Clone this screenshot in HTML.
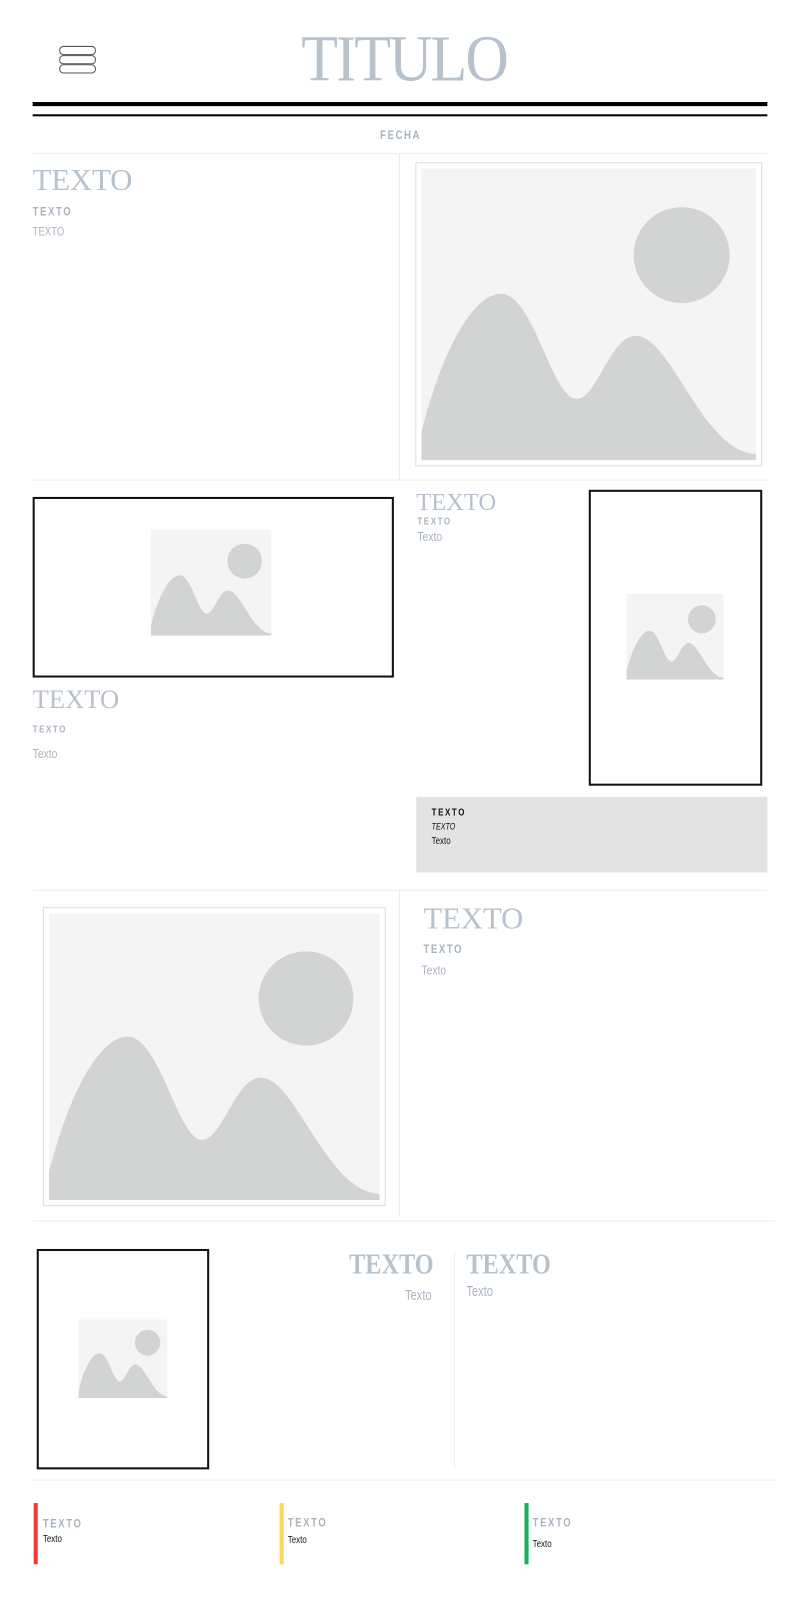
<!DOCTYPE html>
<html><head><meta charset="utf-8"><style>
*{margin:0;padding:0;box-sizing:border-box}
body{width:800px;height:1600px;background:#fff;position:relative;overflow:hidden;font-family:"Liberation Sans",sans-serif}
#w{position:absolute;left:0;top:0;width:784px;height:1568px;transform:scale(1.0204);transform-origin:0 0}
.a{position:absolute;white-space:nowrap}
.n{transform:scaleX(.78);transform-origin:0 0}
.ser{font-family:"Liberation Serif",serif;color:#b7c2cc;line-height:1}
.sm{font-weight:bold;letter-spacing:2px;color:#a9b4bf;line-height:1}
.tx{color:#aab5c0;line-height:1}
.hl{position:absolute;height:1px;background:#ececec}
.vl{position:absolute;width:1px;background:#ececec}
.ph{position:absolute;display:block}
.bx{position:absolute;border:2px solid #111}
.fr{position:absolute;border:1px solid #ddd}
.bar{position:absolute;width:4px;top:1473px;height:60px}
</style></head><body><div id="w">
<svg width="0" height="0" style="position:absolute"><defs><symbol id="im" viewBox="0 0 328 286" preserveAspectRatio="none"><rect width="328" height="286" fill="#f4f4f4"/><circle cx="255" cy="85" r="47" fill="#d2d3d3"/><path d="M0 258 C20 180 50 123 78 123 C110 123 128 226 152 226 C172 226 185 164 210 164 C245 164 275 278 328 280 L328 286 L0 286 Z" fill="#d2d3d3"/></symbol></defs></svg>

<div class="a" style="left:58px;top:45px;width:36px;height:9px;border:1.5px solid #555;border-radius:4px"></div>
<div class="a" style="left:58px;top:54px;width:36px;height:9px;border:1.5px solid #555;border-radius:4px"></div>
<div class="a" style="left:58px;top:63px;width:36px;height:9px;border:1.5px solid #555;border-radius:4px"></div>
<div class="a ser" style="left:0;width:792px;text-align:center;top:26px;font-size:64px;letter-spacing:-2px;transform:scaleX(.92)">TITULO</div>
<div class="a" style="left:32px;top:100px;width:720px;height:4px;background:#000"></div>
<div class="a" style="left:32px;top:112px;width:720px;height:2px;background:#000"></div>
<div class="a sm" style="left:0;width:785px;text-align:center;top:126px;font-size:12px;transform:scaleX(.78)">FECHA</div>
<div class="hl" style="left:32px;top:150px;width:720px"></div>

<div class="vl" style="left:391px;top:150px;height:320px"></div>
<div class="a ser" style="left:32px;top:162px;font-size:30px">TEXTO</div>
<div class="a sm n" style="left:32px;top:201px;font-size:12px">TEXTO</div>
<div class="a tx n" style="left:32px;top:221px;font-size:12px">TEXTO</div>
<div class="fr" style="left:407px;top:159px;width:340px;height:298px"></div>
<svg class="ph" style="left:413px;top:165px" width="328" height="286"><use href="#im"/></svg>
<div class="hl" style="left:32px;top:470px;width:720px"></div>

<div class="bx" style="left:32px;top:487px;width:354px;height:177px"></div>
<svg class="ph" style="left:148px;top:519px" width="118" height="104"><use href="#im"/></svg>
<div class="a ser" style="left:32px;top:673px;font-size:26px">TEXTO</div>
<div class="a sm n" style="left:32px;top:711px;font-size:10px">TEXTO</div>
<div class="a tx n" style="left:32px;top:732px;font-size:13px">Texto</div>
<div class="a ser" style="left:408px;top:481px;font-size:24px">TEXTO</div>
<div class="a sm n" style="left:409px;top:507px;font-size:10px">TEXTO</div>
<div class="a tx n" style="left:409px;top:519px;font-size:13px">Texto</div>
<div class="bx" style="left:577px;top:480px;width:170px;height:290px"></div>
<svg class="ph" style="left:614px;top:582px" width="95" height="84"><use href="#im"/></svg>
<div class="a" style="left:408px;top:781px;width:344px;height:74px;background:#e3e3e3"></div>
<div class="a n" style="left:423px;top:792px;font-size:10px;font-weight:bold;letter-spacing:2px;color:#111;line-height:1">TEXTO</div>
<div class="a n" style="left:423px;top:806px;font-size:9px;font-style:italic;color:#111;line-height:1">TEXTO</div>
<div class="a n" style="left:423px;top:820px;font-size:10px;color:#111;line-height:1">Texto</div>
<div class="hl" style="left:32px;top:872px;width:720px"></div>

<div class="vl" style="left:391px;top:872px;height:320px"></div>
<div class="fr" style="left:42px;top:889px;width:336px;height:293px"></div>
<svg class="ph" style="left:48px;top:895px" width="324" height="281"><use href="#im"/></svg>
<div class="a ser" style="left:415px;top:886px;font-size:30px">TEXTO</div>
<div class="a sm n" style="left:415px;top:924px;font-size:12px">TEXTO</div>
<div class="a tx n" style="left:413px;top:944px;font-size:13px">Texto</div>
<div class="hl" style="left:32px;top:1196px;width:728px"></div>

<div class="vl" style="left:445px;top:1227px;height:213px"></div>
<div class="bx" style="left:36px;top:1224px;width:169px;height:216px"></div>
<svg class="ph" style="left:77px;top:1293px" width="87" height="77"><use href="#im"/></svg>
<div class="a ser" style="left:225px;width:200px;text-align:right;top:1226px;font-size:28px;font-weight:bold;transform:scaleX(.85);transform-origin:100% 0">TEXTO</div>
<div class="a tx" style="left:323px;width:100px;text-align:right;top:1262px;font-size:14px;transform:scaleX(.78);transform-origin:100% 0">Texto</div>
<div class="a ser" style="left:457px;top:1226px;font-size:28px;font-weight:bold;transform:scaleX(.85);transform-origin:0 0">TEXTO</div>
<div class="a tx n" style="left:457px;top:1258px;font-size:14px">Texto</div>
<div class="hl" style="left:32px;top:1450px;width:728px"></div>

<div class="bar" style="left:33px;background:#f03a3a"></div>
<div class="a sm n" style="left:42px;top:1487px;font-size:12px">TEXTO</div>
<div class="a n" style="left:42px;top:1504px;font-size:10px;color:#111;line-height:1">Texto</div>
<div class="bar" style="left:274px;background:#fbd85a"></div>
<div class="a sm n" style="left:282px;top:1486px;font-size:12px">TEXTO</div>
<div class="a n" style="left:282px;top:1505px;font-size:10px;color:#111;line-height:1">Texto</div>
<div class="bar" style="left:514px;background:#14b35a"></div>
<div class="a sm n" style="left:522px;top:1486px;font-size:12px">TEXTO</div>
<div class="a n" style="left:522px;top:1509px;font-size:10px;color:#111;line-height:1">Texto</div>
</div></body></html>
